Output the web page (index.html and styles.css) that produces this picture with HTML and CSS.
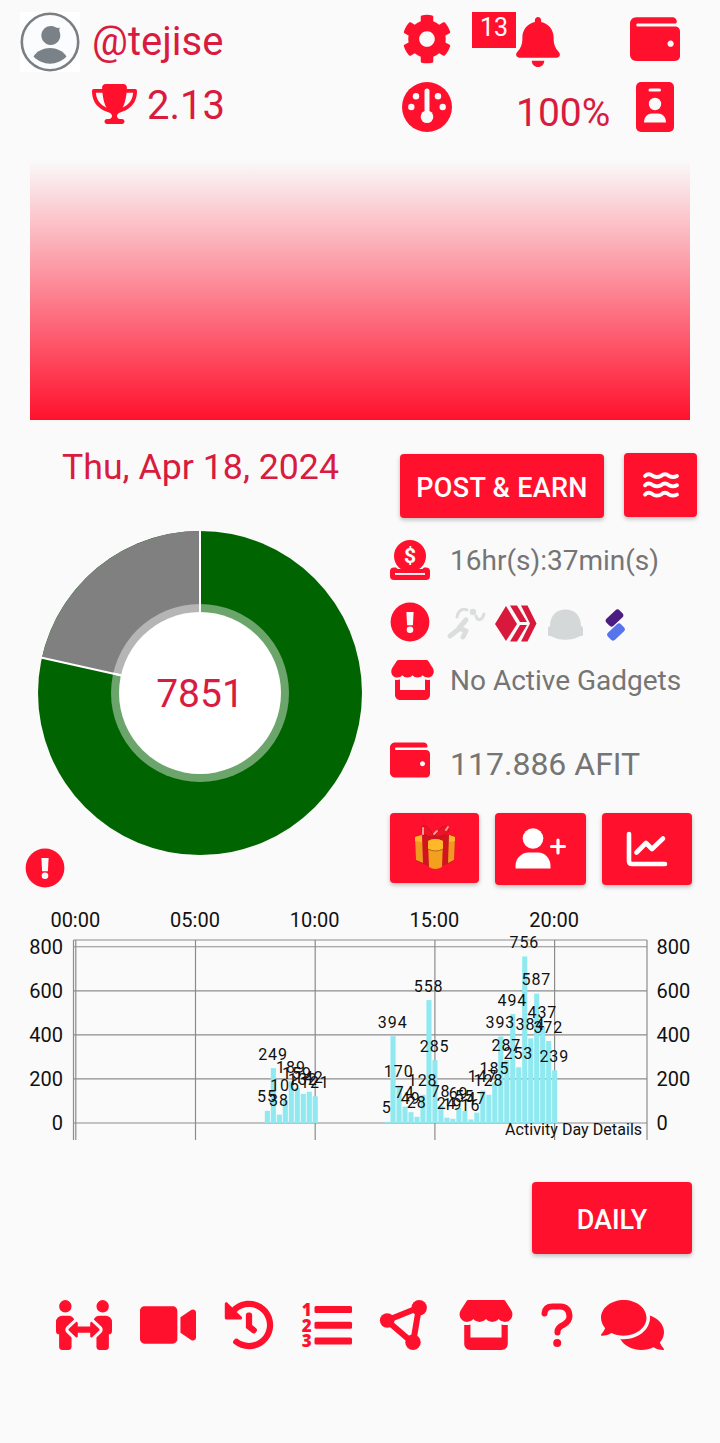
FILE: index.html
```html
<!DOCTYPE html>
<html lang="en">
<head>
  <meta charset="utf-8">
  <title>Activity</title>
  <link rel="stylesheet" href="styles.css">
</head>
<body>
  <!-- Shared icons -->
  <svg class="sprite">
    <symbol id="wallet" viewBox="0 0 512 512">
      <path d="M461.2 128H80c-8.84 0-16-7.16-16-16s7.16-16 16-16h384c8.84 0 16-7.16 16-16 0-26.51-21.49-48-48-48H64C28.65 32 0 60.65 0 96v320c0 35.35 28.65 64 64 64h397.2c28.02 0 50.8-21.53 50.8-48V176c0-26.47-22.78-48-50.8-48zM416 336c-17.67 0-32-14.33-32-32s14.33-32 32-32 32 14.33 32 32-14.33 32-32 32z"/>
    </symbol>
    <symbol id="store" viewBox="0 0 576 512">
      <path d="M547.6 103.8L490.3 13.1C485.2 5 476.1 0 466.4 0H109.6C99.9 0 90.8 5 85.7 13.1L28.3 103.8c-29.6 46.8-3.4 111.9 51.9 119.4c4 .5 8.1 .8 12.1 .8c26.1 0 49.3-11.4 65.2-29c15.9 17.6 39.1 29 65.2 29c26.1 0 49.3-11.4 65.2-29c15.9 17.6 39.1 29 65.2 29c26.2 0 49.3-11.4 65.2-29c16 17.6 39.1 29 65.2 29c4.1 0 8.1-.3 12.1-.8c55.5-7.4 81.8-72.5 52.1-119.4zM499.7 254.9l-.1 0c-5.3 .7-10.7 1.1-16.2 1.1c-12.4 0-24.3-1.9-35.4-5.3V384H128V250.6c-11.2 3.5-23.2 5.4-35.6 5.4c-5.5 0-11-.4-16.3-1.1l-.1 0c-4.1-.6-8.1-1.3-12-2.3V448c0 35.3 28.7 64 64 64H448c35.3 0 64-28.7 64-64V252.6c-4 1-8 1.8-12.3 2.3z"/>
    </symbol>
    <symbol id="alert" viewBox="0 0 40 40">
      <circle cx="20" cy="20" r="19.4"/>
      <path class="paper" d="M16.4 10h7.2l-.7 13.2h-5.8z"/>
      <circle class="paper" cx="20" cy="27.8" r="3.3"/>
    </symbol>
  </svg>

  <header class="header">
    <div class="row row-user">
      <svg class="avatar" viewBox="0 0 60 60">
        <rect width="60" height="60" fill="#fff"/>
        <circle cx="30" cy="30" r="28.2" fill="#fbfcfd" stroke="#7c7f82" stroke-width="2.6"/>
        <path d="M40 15.5c-1 1.3-.8 3 0 5.5a9.5 9.5 0 1 1-4-5.5c1.5.6 2.8.5 4 0z" fill="#7a8288"/>
        <path d="M13.5 44.5c7-11.500 26-11.500 33 0c-8.500 9.500-24.500 9.500-33 0z" fill="#7a8288"/>
      </svg>
      <span class="username">@tejise</span>
      <svg class="icon50 gear" viewBox="0 0 512 512"><path d="M487.4 315.7l-42.6-24.6c4.3-23.2 4.3-47 0-70.2l42.6-24.6c4.9-2.8 7.1-8.6 5.5-14-11.1-35.6-30-67.8-54.7-94.6-3.8-4.1-10-5.1-14.8-2.3L380.8 110c-17.9-15.4-38.5-27.3-60.8-35.1V25.8c0-5.6-3.9-10.5-9.4-11.7-36.7-8.2-74.3-7.8-109.2 0-5.5 1.2-9.4 6.1-9.4 11.7V75c-22.2 7.9-42.8 19.8-60.8 35.1L88.7 85.5c-4.9-2.8-11-1.9-14.8 2.3-24.7 26.7-43.6 58.9-54.7 94.6-1.7 5.4.6 11.2 5.5 14L67.3 221c-4.3 23.2-4.3 47 0 70.2l-42.6 24.6c-4.9 2.8-7.1 8.6-5.5 14 11.1 35.6 30 67.8 54.7 94.6 3.8 4.1 10 5.1 14.8 2.3l42.6-24.6c17.9 15.4 38.5 27.3 60.8 35.1v49.2c0 5.6 3.9 10.5 9.4 11.7 36.7 8.2 74.3 7.8 109.2 0 5.5-1.2 9.4-6.1 9.4-11.7v-49.2c22.2-7.9 42.8-19.8 60.8-35.1l42.6 24.6c4.9 2.8 11 1.9 14.8-2.3 24.7-26.7 43.6-58.9 54.7-94.6 1.5-5.5-.7-11.3-5.6-14.1zM256 336c-44.1 0-80-35.9-80-80s35.9-80 80-80 80 35.9 80 80-35.9 80-80 80z"/></svg>
      <span class="count">13</span>
      <svg class="bell" viewBox="0 0 448 512"><path d="M224 0c-17.7 0-32 14.3-32 32V51.2C119 66 64 130.6 64 208v18.8c0 47-17.3 92.4-48.5 127.6l-7.4 8.3c-8.4 9.4-10.4 22.9-5.3 34.4S19.4 416 32 416H416c12.6 0 24-7.4 29.2-18.9s3.1-25-5.3-34.4l-7.4-8.3C401.3 319.2 384 273.9 384 226.8V208c0-77.4-55-142-128-156.8V32c0-17.7-14.3-32-32-32zm45.3 493.3c12-12 18.7-28.3 18.7-45.3H160c0 17 6.7 33.3 18.7 45.3s28.3 18.7 45.3 18.7s33.3-6.7 45.3-18.7z"/></svg>
      <svg class="icon50"><use href="#wallet"/></svg>
    </div>
    <div class="row row-stats">
      <svg class="trophy" viewBox="0 0 576 512"><path d="M400 0H176c-26.5 0-48.1 21.8-47.1 48.2c.2 5.3 .4 10.6 .7 15.8H24C10.7 64 0 74.7 0 88c0 92.6 33.5 157 78.5 200.7c44.3 43.1 98.3 64.8 138.1 75.8c23.4 6.5 39.4 26 39.4 45.6c0 20.9-17 37.9-37.9 37.9H192c-17.7 0-32 14.3-32 32s14.3 32 32 32H384c17.7 0 32-14.3 32-32s-14.3-32-32-32H357.9C337 448 320 431 320 410.1c0-19.6 15.9-39.2 39.4-45.6c39.9-11 93.9-32.7 138.2-75.8C542.5 245 576 180.6 576 88c0-13.3-10.7-24-24-24H446.4c.3-5.2 .5-10.4 .7-15.8C448.1 21.8 426.5 0 400 0zM48.9 112h84.4c9.1 90.1 29.2 150.3 51.9 190.6c-24.9-11-50.8-26.5-73.2-48.3c-32-31.1-58-76-63-142.3zM464.1 254.3c-22.4 21.8-48.3 37.3-73.2 48.3c22.7-40.3 42.8-100.5 51.9-190.6h84.4c-5.1 66.3-31.1 111.2-63 142.3z"/></svg>
      <span class="rank">2.13</span>
      <svg class="icon50" viewBox="0 0 50 50">
        <circle cx="25" cy="25" r="25"/>
        <g class="paper">
          <circle cx="9.3" cy="25" r="3.2"/><circle cx="14" cy="14.2" r="3.2"/>
          <circle cx="36" cy="14.2" r="3.2"/><circle cx="40.7" cy="25" r="3.2"/>
          <rect x="22.5" y="6.5" width="5" height="24" rx="2.5"/>
          <circle cx="25" cy="34.7" r="6.3"/>
        </g>
      </svg>
      <span class="power">100%</span>
      <svg class="badge" viewBox="0 0 38 50">
        <rect width="38" height="50" rx="5"/>
        <g class="paper">
          <rect x="12.5" y="6.5" width="12.5" height="3" rx="1.5"/>
          <circle cx="19" cy="22" r="6.2"/>
          <path d="M8 40.5c0-6 4-9 8-9h6c4 0 8 3 8 9z"/>
        </g>
      </svg>
    </div>
  </header>

  <div class="banner"></div>

  <main class="main">
    <section class="progress">
      <div class="date">Thu, Apr 18, 2024</div>
      <svg class="donut" viewBox="0 0 326 326">
        <circle cx="163" cy="163" r="162" fill="#006400"/>
        <path d="M163 163V1A162 162 0 0 0 4.9 127.7z" fill="#808080"/>
        <path d="M163 163V1M163 163L4.9 127.7" stroke="#fff" stroke-width="2"/>
        <circle cx="163" cy="163" r="89" fill="#fff" fill-opacity=".42"/>
        <path d="M163 163V74M163 163L76 143.6" stroke="#fff" stroke-width="2"/>
        <circle cx="163" cy="163" r="81" fill="#fff"/>
        <text class="steps" x="163" y="177" text-anchor="middle">7851</text>
      </svg>
      <svg class="icon40 note"><use href="#alert"/></svg>
    </section>

    <section class="details">
      <div class="actions">
        <button class="btn post">POST &amp; EARN</button>
        <button class="btn water">
          <svg width="36" height="28" viewBox="0 0 36 28">
            <g fill="none" stroke="#fff" stroke-width="3.8" stroke-linecap="round" stroke-linejoin="round">
              <path d="M2 5q3.500-3.500 8 0q4 2 8 0q4-3.500 8 0q4 2 8 0"/>
              <path d="M2 14.300q3.500-3.500 8 0q4 2 8 0q4-3.500 8 0q4 2 8 0"/>
              <path d="M2 23.600q3.500-3.500 8 0q4 2 8 0q4-3.500 8 0q4 2 8 0"/>
            </g>
          </svg>
        </button>
      </div>

      <div class="item item-time">
        <svg class="icon40" viewBox="0 0 40 40">
          <rect y="27.5" width="40" height="12.5" rx="4"/>
          <circle class="paper" cx="20" cy="16" r="18"/>
          <path d="M7 29h26v4H7z"/>
          <path class="paper" d="M5 33h30v1.9H5z"/>
          <circle cx="20" cy="16" r="16"/>
          <text class="coin" x="20" y="23" text-anchor="middle">$</text>
        </svg>
        <span>16hr(s):37min(s)</span>
      </div>

      <div class="item item-chains">
        <svg class="icon40"><use href="#alert"/></svg>
        <svg class="chains" viewBox="0 0 184 40">
          <g fill="none" stroke="#dcdede" stroke-linecap="round" stroke-linejoin="round">
            <path d="M9 15c1-6 5-9 10-7M28 14c1 5 6 5 8-2" stroke-width="3"/>
            <path d="M18 18l-7 8 7 3-3 6M11 27L2 34" stroke-width="5"/>
          </g>
          <circle cx="25" cy="10" r="3.2" fill="#dcdede"/>
          <g fill="#d8193b">
            <path d="M58 4l11 18-11 17-11-17z"/>
            <path d="M62 3.500h7l10 16.500h-7zM62 39.500h7l10-16.500h-7z"/>
            <path d="M73 3.500h6.500l9 18-9 18H73l9-18z"/>
          </g>
          <path d="M100 33.500v-7q0-2.500 2-2.500C102 14 108 7.500 117.500 7.500S133 14 133 24q2 0 2 2.500v7q-3.500.5-6 2c-6 3-17 3-23 0q-3-1.500-6-2z" fill="#d4d8d8"/>
          <rect x="157.5" y="11" width="18" height="10" rx="3" fill="#4b1d80" transform="rotate(-43 166.5 16)"/>
          <rect x="159" y="25" width="18" height="10" rx="3" fill="#5674ec" transform="rotate(-43 168 30)"/>
        </svg>
      </div>

      <div class="item item-gadgets">
        <svg class="store-sm"><use href="#store"/></svg>
        <span>No Active Gadgets</span>
      </div>

      <div class="item item-tokens">
        <svg class="icon40"><use href="#wallet"/></svg>
        <span>117.886 AFIT</span>
      </div>

      <div class="tiles">
        <button class="btn tile gift">
          <svg width="42" height="46" viewBox="0 0 42 46">
            <path d="M1 11l20-3 20 3-1 25-19 8L2 36z" fill="#cf161f"/>
            <path d="M1 12l7-2 1 28-7-3zM41 12l-6-2-1 28 6-3z" fill="#f09a22"/>
            <path d="M1 12l7-2v7l-7-1zM41 12l-6-2v7l6-1z" fill="#ffb62e"/>
            <path d="M14 16q7-4 15 0l-1 26q-7 4-13 0z" fill="#f4a01f"/>
            <path d="M14 16q7-4 15 0v8q-8 4-15 0z" fill="#ffb928"/>
            <path d="M14 24q8 4 15 0" fill="none" stroke="#b5651d"/>
            <path d="M20 12C10 12 6 6 8 2s8 1 12 10c5-9 11-13 14-9s-3 9-14 9z" fill="#ee1426" stroke="#c8121f"/>
            <path d="M9 9V3M32 5l2-3M20 9l3-3" stroke="#ff9a9a" stroke-width="2" stroke-linecap="round"/>
          </svg>
        </button>
        <button class="btn tile friends">
          <svg width="52" height="42" viewBox="0 0 52 42">
            <g fill="#fff">
              <circle cx="18" cy="10.5" r="10.3"/>
              <path d="M.5 40.500V38C.5 29 8 24.500 13 24.500h10c7 0 12.500 6 12.500 13.500v2.500z"/>
            </g>
            <path d="M43 12v13M36.500 18.500h13" fill="none" stroke="#fff" stroke-width="3.2" stroke-linecap="round"/>
          </svg>
        </button>
        <button class="btn tile">
          <svg width="42" height="36" viewBox="0 0 42 36">
            <g fill="none" stroke="#fff" stroke-width="4.6" stroke-linecap="round" stroke-linejoin="round">
              <path d="M3 3v27q0 3 3 3h33"/>
              <path d="M10.500 21.500L20 12l6 6L37 7.500"/>
            </g>
          </svg>
        </button>
      </div>
    </section>
  </main>

  <svg id="dayChart" class="chart" viewBox="0 900 720 250"></svg>

  <div class="period">
    <button class="btn daily">DAILY</button>
  </div>

  <nav class="nav">
    <svg width="56" height="50" viewBox="0 0 576 512"><path d="M96,128A64,64,0,1,0,32,64,64,64,0,0,0,96,128Zm0,176.08a44.11,44.11,0,0,1,13.64-32L181.77,204c1.65-1.55,3.77-2.31,5.61-3.57A63.91,63.91,0,0,0,128,160H64A64,64,0,0,0,0,224v96a32,32,0,0,0,32,32V480a32,32,0,0,0,32,32h64a32,32,0,0,0,32-32V383.61l-50.36-47.53A44.08,44.08,0,0,1,96,304.08ZM480,128a64,64,0,1,0-64-64A64,64,0,0,0,480,128Zm32,32H448a63.91,63.91,0,0,0-59.38,40.42c1.84,1.27,4,2,5.62,3.59l72.12,68.06a44.37,44.37,0,0,1,0,64L416,383.62V480a32,32,0,0,0,32,32h64a32,32,0,0,0,32-32V352a32,32,0,0,0,32-32V224A64,64,0,0,0,512,160ZM444.4,295.34l-72.12-68.06A12,12,0,0,0,352,236v36H224V236a12,12,0,0,0-20.28-8.73L131.6,295.34a12.4,12.4,0,0,0,0,17.47l72.12,68.07A12,12,0,0,0,224,372.14V336H352v36.14a12,12,0,0,0,20.28,8.74l72.12-68.07A12.4,12.4,0,0,0,444.4,295.34Z"/></svg>
    <svg class="nav-video" width="56" height="50" viewBox="0 0 576 512"><path d="M336.2 64H47.8C21.4 64 0 85.4 0 111.8v288.4C0 426.6 21.4 448 47.8 448h288.4c26.4 0 47.8-21.4 47.8-47.8V111.8c0-26.4-21.4-47.8-47.8-47.8zm189.4 37.7L416 177.3v157.4l109.6 75.5c21.2 14.6 50.4-.3 50.4-25.8V127.5c0-25.4-29.1-40.4-50.4-25.8z"/></svg>
    <svg class="nav-history" width="50" height="50" viewBox="0 0 512 512"><path d="M504 255.531c.253 136.64-111.18 248.372-247.82 248.468-59.015.042-113.223-20.53-155.822-54.911-11.077-8.94-11.905-25.541-1.839-35.607l11.267-11.267c8.609-8.609 22.353-9.551 31.891-1.984C173.062 425.135 212.781 440 256 440c101.705 0 184-82.311 184-184 0-101.705-82.311-184-184-184-48.814 0-93.149 18.969-126.068 49.932l50.754 50.754c10.08 10.08 2.941 27.314-11.313 27.314H24c-8.837 0-16-7.163-16-16V38.627c0-14.254 17.234-21.393 27.314-11.314l49.372 49.372C129.209 34.136 189.552 8 256 8c136.81 0 247.747 110.78 248 247.531zm-180.912 78.784l9.823-12.63c8.138-10.463 6.253-25.542-4.21-33.679L288 256.349V152c0-13.255-10.745-24-24-24h-16c-13.255 0-24 10.745-24 24v135.651l65.409 50.874c10.463 8.137 25.541 6.253 33.679-4.21z"/></svg>
    <svg class="nav-list" width="50" height="50" viewBox="0 0 50 50">
      <rect x="12.5" y="6" width="37.5" height="7" rx="1.5"/>
      <rect x="12.5" y="21.7" width="37.5" height="7" rx="1.5"/>
      <rect x="12.5" y="37.4" width="37.5" height="7" rx="1.5"/>
      <text class="ol" x="4.8" y="16" text-anchor="middle">1</text>
      <text class="ol" x="4.8" y="31.5" text-anchor="middle">2</text>
      <text class="ol" x="4.8" y="47" text-anchor="middle">3</text>
    </svg>
    <svg class="nav-nodes" width="50" height="50" viewBox="0 0 50 50">
      <path d="M6.800 20.500L39 7.500L33 43z" fill="none" stroke="#ff112d" stroke-width="6"/>
      <circle cx="7.2" cy="20.5" r="7.3"/><circle cx="39.2" cy="7.7" r="7.7"/><circle cx="33" cy="42.3" r="7.7"/>
    </svg>
    <svg class="nav-store" width="56" height="50"><use href="#store"/></svg>
    <svg class="nav-help" width="32" height="50" viewBox="0 0 32 50">
      <path d="M3.500 13.500q.5-7 8-7h8q8.500.5 9 9.500q0 5-5.500 8.500q-6.500 3-6.500 7v1" fill="none" stroke="#ff112d" stroke-width="6" stroke-linecap="round" stroke-linejoin="round"/>
      <circle cx="16.2" cy="43" r="4"/>
    </svg>
    <svg class="nav-chat" width="63" height="50" viewBox="0 32 576 448" preserveAspectRatio="none"><path d="M416 192c0-88.4-93.1-160-208-160S0 103.6 0 192c0 34.3 14.1 65.9 38 92-13.4 30.2-35.5 54.2-35.8 54.5-2.2 2.3-2.8 5.7-1.5 8.7S4.8 352 8 352c36.6 0 66.9-12.3 88.7-25 32.2 15.7 70.3 25 111.3 25 114.9 0 208-71.6 208-160zm122 220c23.9-26 38-57.7 38-92 0-66.9-53.5-124.2-129.3-148.1.9 6.6 1.3 13.3 1.3 20.1 0 105.9-107.7 192-240 192-10.8 0-21.3-.8-31.7-1.9C207.8 439.6 281.8 480 368 480c41 0 79.1-9.2 111.3-25 21.8 12.7 52.1 25 88.7 25 3.2 0 6.1-1.9 7.3-4.8 1.3-2.9.7-6.3-1.5-8.7-.3-.2-22.4-24.2-35.8-54.5z"/></svg>
  </nav>

  <script src="chart.js"></script>
</body>
</html>
```
FILE: styles.css
```css
body {
  margin: 0;
  background-color: #fafafa;
  font-family: Roboto, sans-serif;
  color: #d81b3f;
}

svg {
  display: block;
  flex: none;
  fill: #ff112d;
  overflow: visible;
}

.sprite {
  width: 0;
  height: 0;
  position: absolute;
}

.paper {
  fill: #fafafa;
}

.icon50 {
  width: 50px;
  height: 50px;
}

.icon40 {
  width: 40px;
  height: 40px;
}

/* Header */
.header {
  height: 148px;
  padding-top: 12px;
}

.row {
  display: grid;
  align-items: center;
}

.row-user {
  grid-template-columns: 72px 310px 70px 44px 114px 50px;
  height: 60px;
  padding-left: 20px;
}

.avatar {
  width: 60px;
  height: 60px;
}

.row-user .icon50 {
  margin-bottom: 6px;
}

.username, .rank, .power {
  font-size: 40px;
  line-height: 54px;
}

.count {
  align-self: start;
  height: 36px;
  line-height: 32px;
  font-size: 25px;
  text-align: center;
  color: #fff;
  background-color: #ff112d;
}

.bell {
  width: 44px;
  height: 50px;
}

.row-stats {
  grid-template-columns: 55px 255px 114px 120px 38px;
  height: 66px;
  margin-top: 2px;
  padding-left: 92px;
}

.trophy {
  width: 45px;
  height: 40px;
  margin-bottom: 6px;
}

.rank {
  margin-bottom: 3px;
}

.power {
  padding-top: 11px;
  font-size: 39px;
}

.row-stats {
  align-items: center;
}

.banner {
  height: 260px;
  margin: 0 30px;
  background: linear-gradient(#fafafa, #ff112d);
}

/* Main */
.main {
  display: grid;
  grid-template-columns: 390px 330px;
  height: 480px;
}

.date {
  height: 76px;
  padding: 33px 0 0 62px;
  box-sizing: border-box;
  font-size: 35.7px;
  line-height: 28px;
}

.donut {
  width: 326px;
  height: 326px;
  margin: 34px 0 0 37px;
}

.steps {
  font-size: 39px;
  fill: #d81b3f;
}

.note {
  margin: -8px 0 0 25px;
}

.btn {
  padding: 0;
  border: none;
  border-radius: 4px;
  background-color: #ff112d;
  color: #fff;
  font-family: Roboto, sans-serif;
  font-weight: 500;
  font-size: 27px;
  display: flex;
  align-items: center;
  justify-content: center;
  box-shadow: 0 2px 4px rgba(0,0,0,0.25);
}

.actions {
  display: flex;
  gap: 20px;
  padding: 33px 0 0 10px;
}

.post {
  width: 204px;
  height: 64px;
  margin-top: 1px;
  padding-top: 3px;
  letter-spacing: 0.3px;
}

.water {
  width: 73px;
  height: 64px;
}

.item {
  display: grid;
  grid-template-columns: 60px auto;
  align-items: center;
  height: 40px;
  font-size: 28px;
  color: #757575;
  white-space: nowrap;
}

.item-time {
  margin-top: 22px;
}

.item-chains {
  margin-top: 22px;
}

.chains {
  width: 184px;
  height: 40px;
  margin-left: -2px;
}

.item-gadgets {
  margin-top: 18px;
}

.store-sm {
  width: 45px;
  height: 40px;
}

.item-tokens {
  margin-top: 40px;
  font-size: 32px;
}

.item-tokens .icon40 {
  margin-bottom: 3px;
}

.item-tokens span {
  padding-top: 5px;
}

.tiles {
  display: flex;
  gap: 16px;
  margin-top: 33px;
}

.tile {
  width: 90px;
  height: 72px;
}

.gift {
  width: 89px;
  height: 70px;
}

.friends {
  width: 91px;
}

.coin {
  font-size: 21px;
  font-weight: 700;
  fill: #fff;
}

/* Day chart */
.chart {
  width: 720px;
  height: 250px;
}

.axis {
  font-size: 20px;
  fill: #111;
}

.value {
  font-size: 16px;
  letter-spacing: 0.9px;
  fill: #111;
}

.grid-line {
  stroke: #8c8c8c;
  stroke-width: 1.2;
}

.bar {
  fill: #8fe9f0;
}

.period {
  display: flex;
  justify-content: flex-end;
  padding: 32px 28px 0 0;
}

.daily {
  width: 160px;
  height: 72px;
  padding-top: 4px;
}

/* Bottom bar */
.nav {
  display: flex;
  padding: 46px 0 93px 56px;
}

.nav-video, .nav-history, .nav-list, .nav-nodes, .nav-store, .nav-chat {
  margin-left: 28px;
}

.nav-help {
  margin-left: 27px;
}

.ol {
  font-family: "Open Sans", sans-serif;
  font-size: 17px;
  font-weight: 800;
}
```
FILE: chart.js
```js
// steps per 15 minute slot, keyed by slot number
const slots = {
  32: 55, 33: 249, 34: 38, 35: 106, 36: 189, 37: 159, 38: 132, 39: 142, 40: 121,
  52: 5, 53: 394, 54: 170, 55: 74, 56: 49, 57: 28, 58: 128, 59: 558, 60: 285,
  61: 78, 62: 24, 63: 19, 64: 69, 65: 55, 66: 16, 67: 47, 68: 147, 69: 128,
  70: 185, 71: 393, 72: 287, 73: 494, 74: 253, 75: 756, 76: 384, 77: 587,
  78: 437, 79: 372, 80: 239
};

const chart = document.getElementById('dayChart');
const x = slot => 75.8 + slot * 5.985;
const y = value => 1123 - value * 0.2203;

function add(name, attrs, text) {
  const el = document.createElementNS('http://www.w3.org/2000/svg', name);
  Object.keys(attrs).forEach(key => el.setAttribute(key, attrs[key]));
  if (text !== undefined) el.textContent = text;
  chart.appendChild(el);
}

function line(x1, y1, x2, y2) {
  add('line', { x1, y1, x2, y2, class: 'grid-line' });
}

// frame
line(73.5, 940, 647, 940);
line(73.5, 940, 73.5, 1140);
line(647, 940, 647, 1140);

[0, 200, 400, 600, 800].forEach(v => {
  line(73.5, y(v), 647, y(v));
  add('text', { x: 63, y: y(v) + 7, class: 'axis', 'text-anchor': 'end' }, v);
  add('text', { x: 656.5, y: y(v) + 7, class: 'axis' }, v);
});

['00:00', '05:00', '10:00', '15:00', '20:00'].forEach((label, i) => {
  line(x(i * 20), 940, x(i * 20), 1140);
  add('text', { x: x(i * 20) - 0.5, y: 927, class: 'axis', 'text-anchor': 'middle' }, label);
});

Object.keys(slots).forEach(s => {
  add('rect', { x: x(s) - 2.5, y: y(slots[s]), width: 5.1, height: 1123 - y(slots[s]), class: 'bar' });
});

Object.keys(slots).forEach(s => {
  add('text', { x: x(s) - 0.3, y: y(slots[s]) - 8.5, class: 'value', 'text-anchor': 'middle' }, slots[s]);
});

add('text', { x: 505, y: 1135, class: 'value', textLength: 138 }, 'Activity Day Details');
```
